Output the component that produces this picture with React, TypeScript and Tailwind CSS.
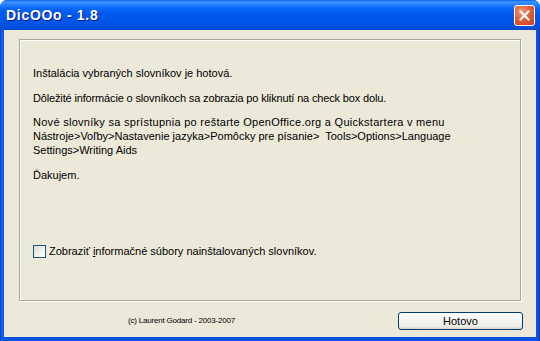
import React from "react";

export default function App() {
  return (
    <div className="w-[540px] h-[341px] bg-white">
      <div className="w-[540px] h-[341px] flex flex-col rounded-t-[7px] overflow-hidden bg-[linear-gradient(to_right,#0831D9_0px,#166AEE_2px,#0A52E0_4px,#0A52E0_536px,#1255DC_538px,#0731C8_540px)]">
        {/* Title bar */}
        <div className="h-[30px] shrink-0 flex items-center justify-between pl-[6px] pr-[5px] bg-[linear-gradient(to_bottom,#0A62F0_0px,#3D95FF_2px,#2A85FF_4px,#0A6AF8_8px,#0058EE_14px,#0055E8_22px,#0050DD_27px,#0046C8_30px)]">
          <span
            className="text-white font-bold text-[14px] leading-none [text-shadow:1px_1px_0_#0A1883] tracking-[0.7px]"
            style={{ fontFamily: '"Liberation Sans", Arial, sans-serif' }}
          >
            DicOOo - 1.8
          </span>
          <div className="w-[21px] h-[21px] rounded-[3px] border border-white bg-[radial-gradient(circle_at_35%_30%,#F0A080_0%,#E0603A_45%,#C63E15_100%)] flex items-center justify-center">
            <svg width="11" height="11" viewBox="0 0 11 11">
              <path d="M1.5 1.5 L9.5 9.5 M9.5 1.5 L1.5 9.5" stroke="white" strokeWidth="2" strokeLinecap="square" />
            </svg>
          </div>
        </div>
        {/* Body */}
        <div
          className="flex-1 mx-[4px] mb-[4px] bg-[#ECE9D8] flex flex-col text-black"
          style={{ fontFamily: '"Liberation Sans", Tahoma, Arial, sans-serif' }}
        >
          <div className="mt-[9px] mx-[15px] h-[262px] border border-[#ACA899] shadow-[1px_1px_0_#FFFFFF,inset_1px_1px_0_#FFFFFF] pl-[13px] pt-[26px] text-[11px] leading-[14px] flex flex-col">
            <p className="mb-[11px]">Inštalácia vybraných slovníkov je hotová.</p>
            <p className="mb-[10px] tracking-[-0.15px]">Dôležité informácie o slovníkoch sa zobrazia po kliknutí na check box dolu.</p>
            <p className="mb-[11px]">
              <span className="tracking-[0.28px]">Nové slovníky sa sprístupnia po reštarte OpenOffice.org a Quickstartera v menu</span>
              <br />
              Nástroje&gt;Voľby&gt;Nastavenie jazyka&gt;Pomôcky pre písanie&gt;&nbsp; Tools&gt;Options&gt;Language
              <br />
              Settings&gt;Writing Aids
            </p>
            <p>Ďakujem.</p>
            <div className="mt-[62px] flex items-center">
              <div className="w-[13px] h-[13px] border border-[#1C5180] bg-[linear-gradient(135deg,#DCDCD7_0%,#F2F2EE_60%,#FFFFFF_100%)]" />
              <span className="ml-[3px]">
                Zobraziť <span className="underline">i</span>nformačné súbory nainštalovaných slovníkov.
              </span>
            </div>
          </div>
          <div className="flex items-center mt-[11px] pr-[13px]">
            <span className="ml-[124px] text-[8px] leading-none tracking-[-0.2px]">(c) Laurent Godard - 2003-2007</span>
            <div className="flex-1" />
            <button className="w-[125px] h-[18px] rounded-[3px] border border-[#003C74] bg-[linear-gradient(to_bottom,#FFFFFF_0%,#F6F6F3_40%,#ECEBE6_85%,#D6D0C5_100%)] text-[11px] leading-none text-black">
              Hotovo
            </button>
          </div>
        </div>
      </div>
    </div>
  );
}
